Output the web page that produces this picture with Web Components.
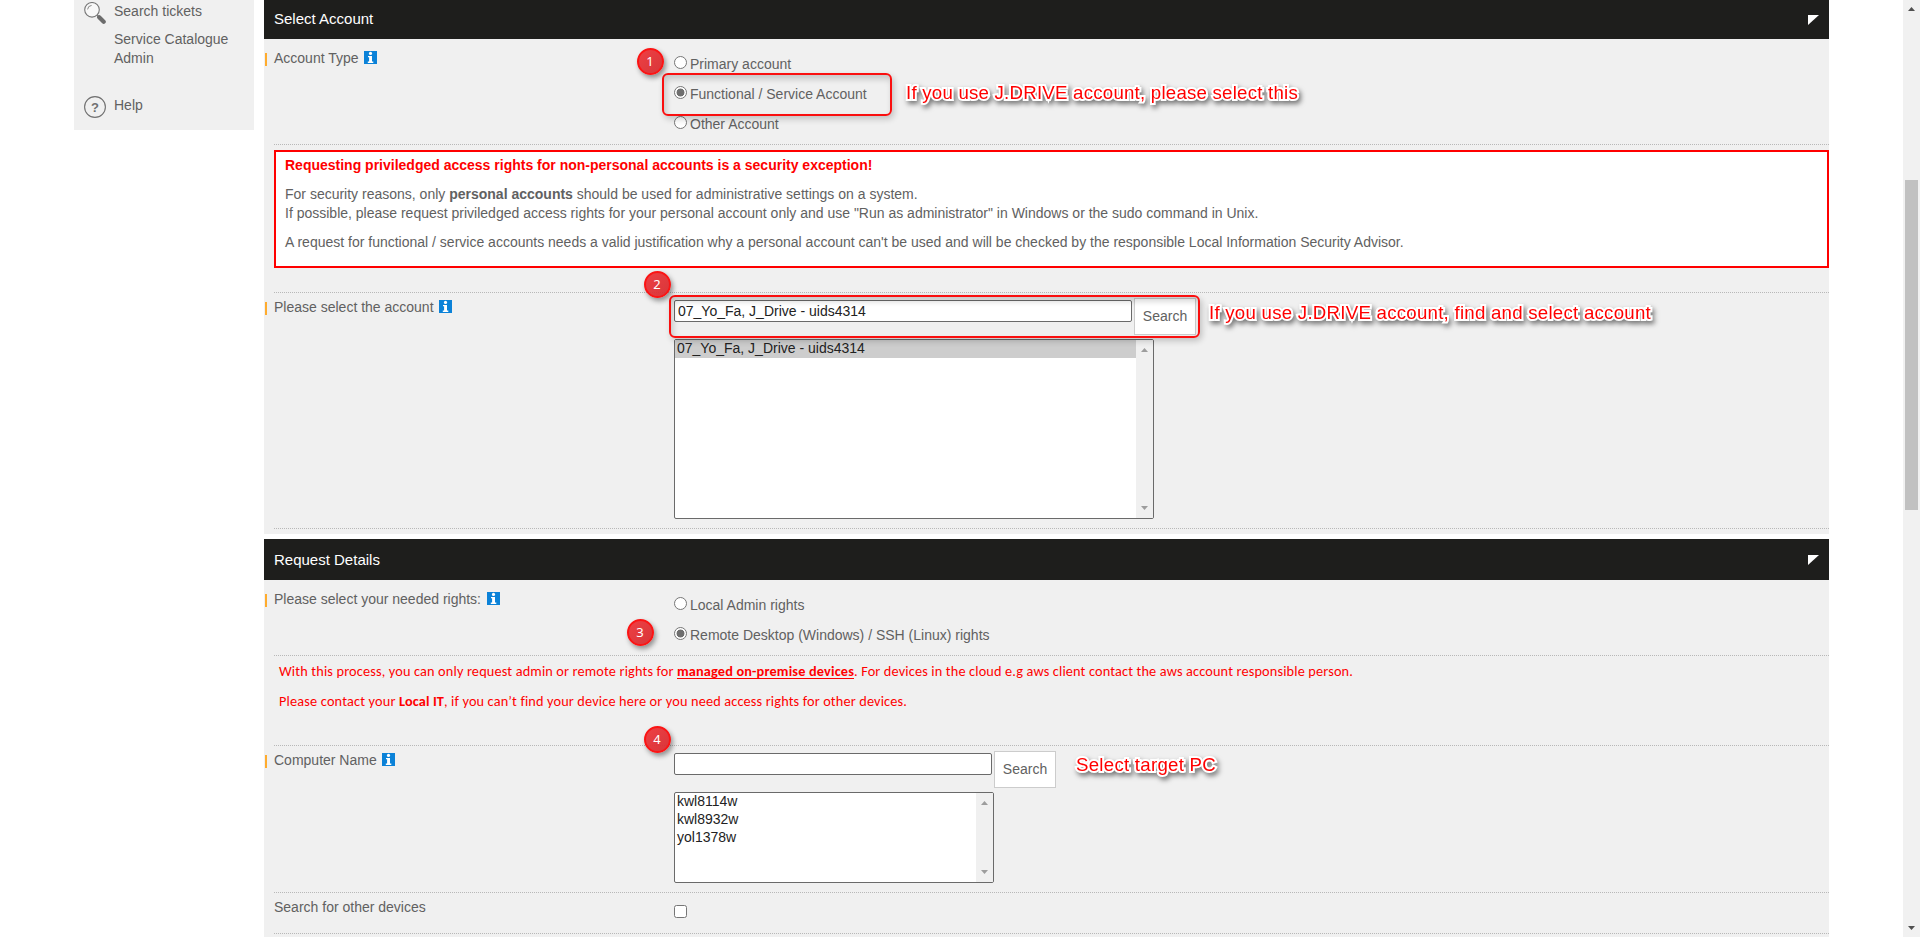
<!DOCTYPE html>
<html lang="en">
<head>
<meta charset="utf-8">
<title>Request access rights</title>
<style>
html,body{margin:0;height:937px;overflow:hidden;background:#fff}
body{font:14px/19px "Liberation Sans",Arial,sans-serif;color:#616161}
</style>
</head>
<body>
<request-page></request-page>
<script>
const define=(name,html,setup)=>customElements.define(name,class extends HTMLElement{
  connectedCallback(){
    if(this.shadowRoot)return;
    const root=this.attachShadow({mode:'open'});
    const t=document.createElement('template');
    t.innerHTML=html;
    root.append(t.content.cloneNode(true));
    if(setup)setup(this,root);
  }
});

define('info-icon',`<style>:host{display:block;width:13px;height:13px}svg{display:block}</style>
<svg width="13" height="13"><rect width="13" height="13" fill="#0b82d8"/><circle cx="6.5" cy="2.4" r="1.6" fill="#fff"/><path d="M4 5h4v5.6h1.3v1.3H3.8v-1.3H5.1V6.2H4z" fill="#fff"/></svg>`);

define('side-item',`<style>:host{display:flex;margin-top:var(--gap,0)}
.i{width:30px;height:22px;flex:none;margin-top:var(--icon-top,0)}.t{width:125px}</style>
<div class="i"><slot name="icon"></slot></div><div class="t"><slot></slot></div>`);

define('side-nav',`<style>:host{display:block;width:180px;height:130px;background:#f0f0f0;box-sizing:border-box;padding:2px 0 0 10px}
svg{display:block}</style>
<side-item><svg slot="icon" width="22" height="22"><circle cx="8" cy="7.8" r="7.3" fill="#f8f8f8" stroke="#777" stroke-width="1.1"/><path d="M3.6 7.4A4.4 4.4 0 0 1 7.6 3.4" fill="none" stroke="#888"/><path d="M13.2 13.2l2 2" stroke="#777" stroke-width="1.5"/><path d="M15.2 15.2l4.5 4.5" stroke="#6c6c6c" stroke-width="4.2" stroke-linecap="round"/></svg>Search tickets</side-item>
<side-item style="--gap:6px">Service Catalogue Admin</side-item>
<side-item style="--gap:28px"><svg slot="icon" width="22" height="22"><circle cx="11" cy="11" r="10.4" fill="none" stroke="#707070" stroke-width="1.1"/><text x="11" y="15.6" text-anchor="middle" font-family="Liberation Sans" font-size="13" font-weight="bold" fill="#707070">?</text></svg>Help</side-item>`);

define('form-section',`<style>:host{display:block;background:#f0f0f0;width:1565px}
header{display:flex;align-items:center;justify-content:space-between;box-sizing:border-box;height:var(--head,39px);background:#1e1e1c;color:#fff;font-size:15px;padding:0 10px}
header span{padding-bottom:var(--lift,0)}
.b{padding:5px 0 5px 0}svg{display:block;position:relative;top:.5px}</style>
<header><span></span><svg width="11" height="10"><path d="M0 0h11L0 10z" fill="#fff"/></svg></header><div class="b"><slot></slot></div>`,
(el,r)=>{r.querySelector('span').textContent=el.getAttribute('heading')});

define('form-row',`<style>:host{display:grid;grid-template-columns:400px 1fr;margin-left:10px;box-sizing:border-box;border-bottom:1px dotted #b8b8b8}
.l{display:flex;align-items:flex-start;gap:var(--info-gap,5px);padding-top:5px;height:19px}
.l::before{content:"";width:2px;height:13px;background:var(--mark,transparent);margin:4px calc(7px - var(--info-gap,5px)) 0 -9px;flex:none}
info-icon{margin-top:2px}
.c{padding-top:5px}</style>
<div class="l"><span></span></div><div class="c"><slot></slot></div>`,
(el,r)=>{
  r.querySelector('span').textContent=el.getAttribute('label');
  if(el.hasAttribute('required')){
    r.querySelector('.l').append(document.createElement('info-icon'));
    el.style.setProperty('--mark','#ffac2e');
  }
});

define('note-row',`<style>:host{display:block;margin-left:10px;box-sizing:border-box;border-bottom:1px dotted #b8b8b8}</style><slot></slot>`);

define('radio-option',`<style>:host{display:flex;height:30px}
i{box-sizing:border-box;width:13px;height:13px;border:1px solid #767676;border-radius:50%;background:#fff;margin:7px 3px 0 0;flex:none}
:host([checked]) i{background:radial-gradient(circle,#6f6f6f 0 3.6px,#fff 4.3px)}
span{margin-top:6px}</style><i></i><span><slot></slot></span>`);

define('check-box',`<style>:host{display:block;box-sizing:border-box;width:13px;height:13px;border:1px solid #767676;border-radius:2.5px;background:#fff;margin-top:7px}</style>`);

define('search-field',`<style>:host{display:flex;align-items:flex-start;height:41px;gap:2px}
.f{box-sizing:border-box;height:22px;width:var(--w);margin-top:2px;border:1px solid #6a6a6a;border-radius:2px;background:#fff;color:#222;line-height:21px;padding-left:3px}
.b{box-sizing:border-box;width:62px;height:37px;border:1px solid #ccc;background:#fff;text-align:center;line-height:35px}</style>
<div class="f"><slot></slot></div><div class="b">Search</div>`);

define('list-box',`<style>:host{display:flex;box-sizing:border-box;border:1px solid #6a6a6a;border-radius:2px;background:#fff;color:#222;overflow:hidden;justify-content:space-between}
.o{flex:1}.s{width:17px;background:#f0f0f0;display:flex;flex-direction:column;justify-content:space-between;align-items:center;padding:8px 0;box-sizing:border-box}
::slotted(div){height:18px;line-height:16px;padding-left:2px}
::slotted(div.on){background:#cdcdcd}</style>
<div class="o"><slot></slot></div><div class="s"><svg width="7" height="4"><path d="M0 4L3.5 0 7 4z" fill="#9d9d9d"/></svg><svg width="7" height="4"><path d="M0 0h7L3.5 4z" fill="#9d9d9d"/></svg></div>`);

define('security-notice',`<style>:host{display:block;box-sizing:border-box;height:118px;margin-top:5px;border:2px solid red;background:#fff;padding:4px 9px}
p{margin:0 0 10px}.h{color:red;font-weight:bold}</style>
<p class="h">Requesting priviledged access rights for non-personal accounts is a security exception!</p>
<p>For security reasons, only <b>personal accounts</b> should be used for administrative settings on a system.<br>If possible, please request priviledged access rights for your personal account only and use "Run as administrator" in Windows or the sudo command in Unix.</p>
<p>A request for functional / service accounts needs a valid justification why a personal account can't be used and will be checked by the responsible Local Information Security Advisor.</p>`);

/* Text run whose tracking is adjusted to a given width. */
define('fit-text',`<style>:host{display:inline-block;white-space:pre}span{display:inline-block}:host([underline]) span{text-decoration:underline;text-underline-offset:2px}</style><span><slot></slot></span>`,
(el,r)=>{
  const s=r.querySelector('span'),w=+el.getAttribute('w');
  s.style.letterSpacing=(w-s.getBoundingClientRect().width)/el.textContent.length+'px';
});

define('device-notice',`<style>:host{display:block;font:14.3px/20px Carlito,Lato,sans-serif;color:red;padding:5px 0 0 5px}
p{margin:0 0 10px;display:flex}b{font-weight:700}</style>
<p><fit-text w="398">With this process, you can only request admin or remote rights for </fit-text><b><fit-text underline w="177">managed on-premise devices</fit-text></b><fit-text w="499">. For devices in the cloud e.g aws client contact the aws account responsible person.</fit-text></p>
<p><fit-text w="120">Please contact your </fit-text><b><fit-text w="45">Local IT</fit-text></b><fit-text w="463">, if you can’t find your device here or you need access rights for other devices.</fit-text></p>`);

define('step-badge',`<style>:host{position:absolute;box-sizing:border-box;width:27px;height:27px;border-radius:50%;border:2px solid #fb1414;background:linear-gradient(135deg,rgba(238,58,62,.97),rgba(214,40,44,.93));box-shadow:2px 3px 5px rgba(0,0,0,.4);color:#fff;text-align:center;font:13px/22px "Noto Sans","DejaVu Sans",sans-serif}</style><slot></slot>`);

define('callout-box',`<style>:host{position:absolute;box-sizing:border-box;border:2px solid #fa0f0f;border-radius:6px;box-shadow:2px 3px 6px rgba(0,0,0,.2),inset 2px 4px 6px rgba(0,0,0,.18)}</style>`);

define('callout-text',`<style>:host{position:absolute;white-space:nowrap;color:#f00;font-size:18.67px;line-height:24px;-webkit-text-stroke:4px #fff;paint-order:stroke fill;filter:drop-shadow(2px 3px 2.5px rgba(0,0,0,.5))}</style><slot></slot>`);

define('page-scrollbar',`<style>:host{display:flex;flex-direction:column;align-items:center;width:17px;height:937px;background:#f1f1f1;box-sizing:border-box;padding:7px 0}
i{width:13px;height:330px;background:#c1c1c1;margin:169px 0 auto}svg{display:block}</style>
<svg width="7" height="4"><path d="M0 4L3.5 0 7 4z" fill="#505050"/></svg><i></i><svg width="7" height="4"><path d="M0 0h7L3.5 4z" fill="#505050"/></svg>`);

define('request-page',`<style>:host{display:flex;align-items:flex-start;width:1920px;height:937px;overflow:hidden;position:relative}
side-nav{margin-left:74px}main{width:1565px;margin-left:10px;display:flex;flex-direction:column;gap:5px}page-scrollbar{margin-left:auto}</style>
<side-nav></side-nav>
<main>
<form-section heading="Select Account" style="--lift:2px">
 <form-row label="Account Type" required style="height:101px"><radio-option>Primary account</radio-option><radio-option checked>Functional / Service Account</radio-option><radio-option>Other Account</radio-option></form-row>
 <note-row style="height:148px;display:flow-root"><security-notice></security-notice></note-row>
 <form-row label="Please select the account" required style="height:236px"><search-field style="--w:458px">07_Yo_Fa, J_Drive - uids4314</search-field><list-box style="width:480px;height:180px"><div class="on">07_Yo_Fa, J_Drive - uids4314</div></list-box></form-row>
</form-section>
<form-section heading="Request Details" style="--head:41px">
 <form-row label="Please select your needed rights:" required style="height:71px;--info-gap:6px"><radio-option>Local Admin rights</radio-option><radio-option checked>Remote Desktop (Windows) / SSH (Linux) rights</radio-option></form-row>
 <note-row style="height:90px"><device-notice></device-notice></note-row>
 <form-row label="Computer Name" required style="height:147px"><search-field style="--w:318px"></search-field><list-box style="width:320px;height:91px"><div>kwl8114w</div><div>kwl8932w</div><div>yol1378w</div></list-box></form-row>
 <form-row label="Search for other devices" style="height:41px"><check-box></check-box></form-row>
</form-section>
</main>
<page-scrollbar></page-scrollbar>
<callout-box style="left:661.5px;top:72.5px;width:230px;height:43px"></callout-box>
<callout-box style="left:668.5px;top:295px;width:531px;height:43px"></callout-box>
<callout-text style="left:906px;top:81px"><fit-text w="392">If you use J.DRIVE account, please select this</fit-text></callout-text>
<callout-text style="left:1209px;top:301px"><fit-text w="442">If you use J.DRIVE account, find and select account</fit-text></callout-text>
<callout-text style="left:1076px;top:753px"><fit-text w="140">Select target PC</fit-text></callout-text>
<step-badge style="left:636.5px;top:47.5px">1</step-badge>
<step-badge style="left:643.5px;top:270.5px">2</step-badge>
<step-badge style="left:626.5px;top:618.5px">3</step-badge>
<step-badge style="left:643.5px;top:725.5px">4</step-badge>`);
</script>
</body>
</html>
